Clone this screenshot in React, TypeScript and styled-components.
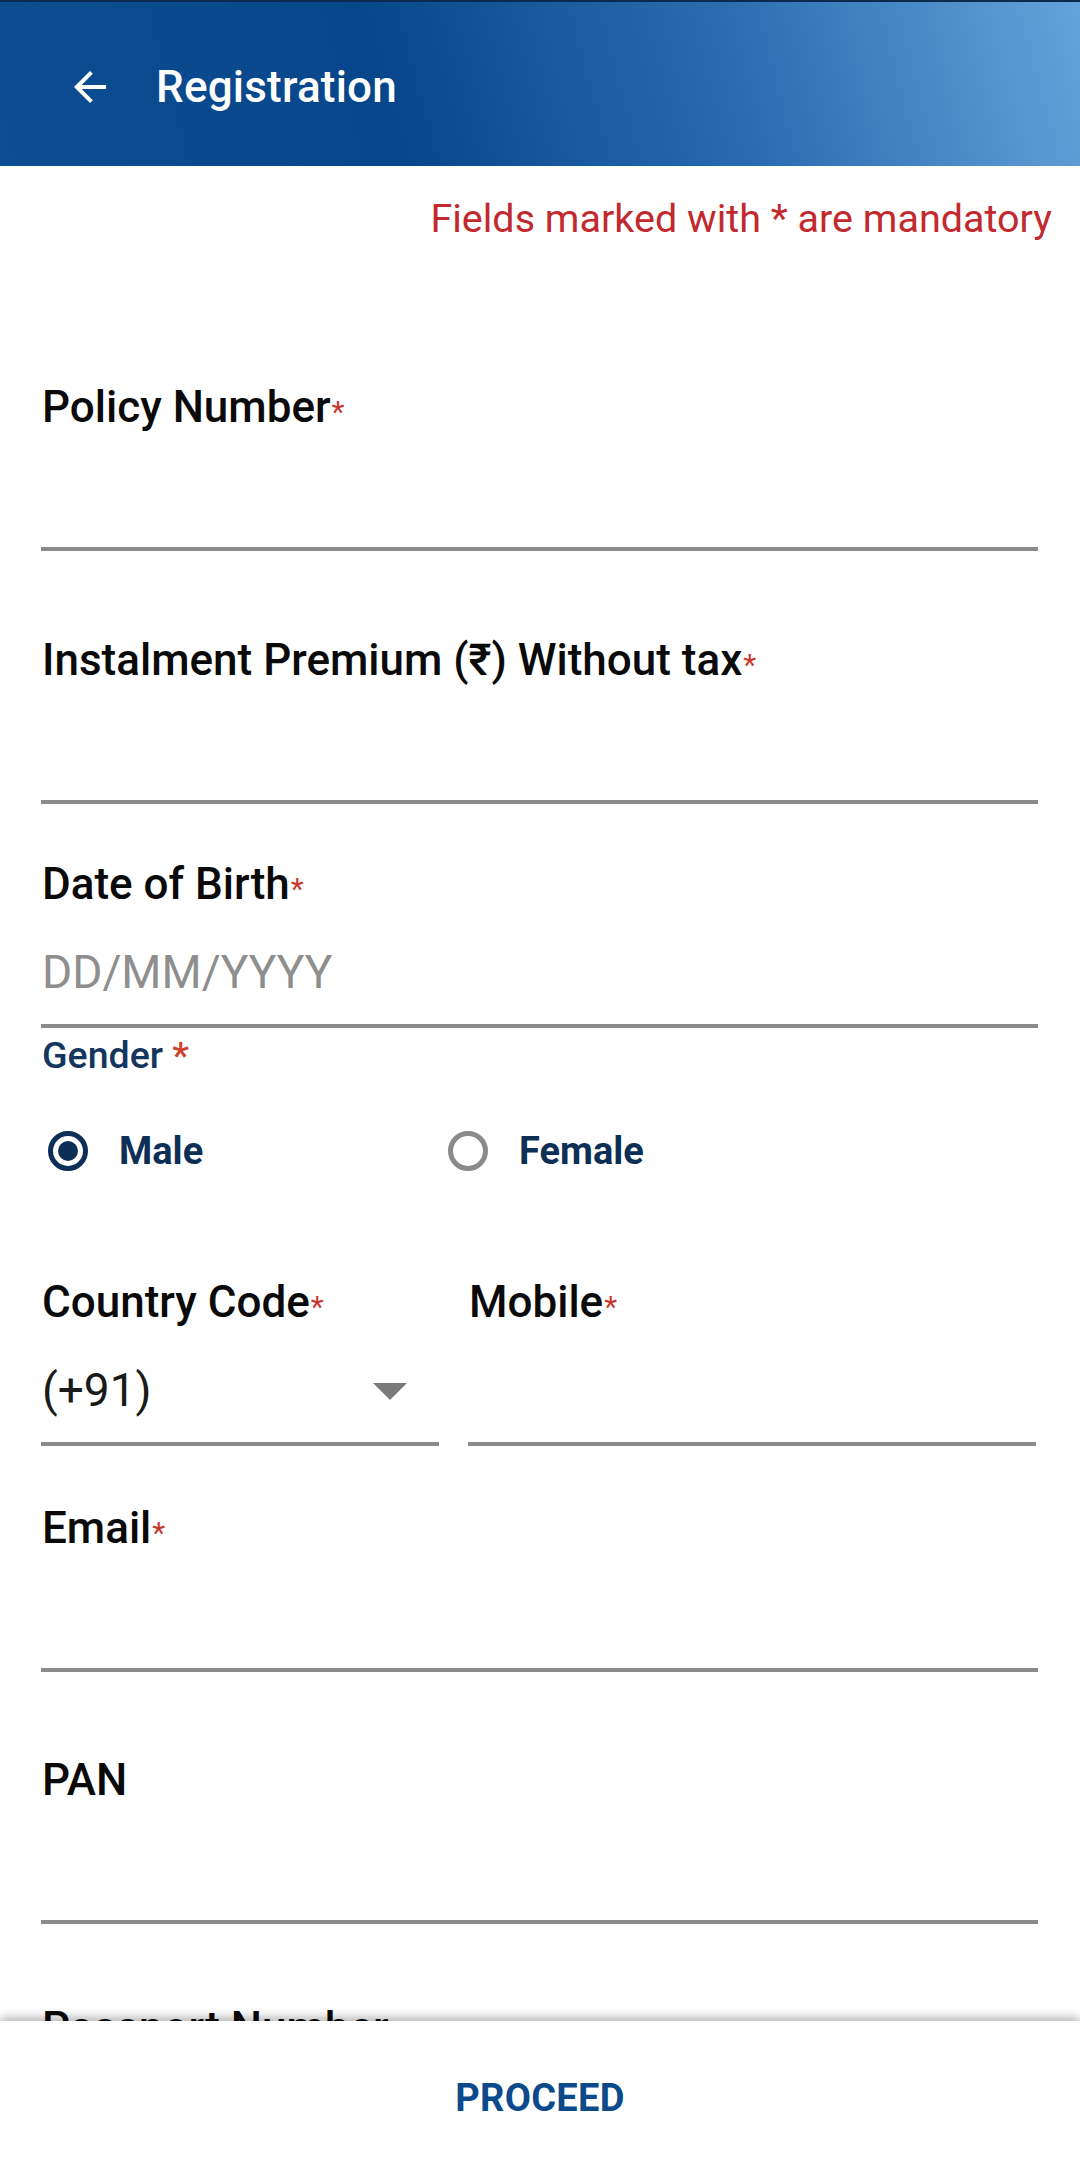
import React from "react";
import styled, { createGlobalStyle } from "styled-components";

const Global = createGlobalStyle`
  html, body { margin: 0; padding: 0; background: #ffffff; }
  body { font-family: Roboto, "Noto Sans", "Liberation Sans", sans-serif; }
  * { box-sizing: border-box; }
`;

const Screen = styled.div`
  width: 1080px;
  height: 2170px;
  display: flex;
  flex-direction: column;
  overflow: hidden;
  background: #ffffff;
`;

const AppBar = styled.header`
  flex: 0 0 166px;
  display: flex;
  align-items: center;
  gap: 42px;
  padding: 6px 0 0 66px;
  border-top: 2px solid #0b2a4d;
  background: linear-gradient(75deg, #0d4d92 0%, #07468b 36%, #2b6cb1 68%, #66a2db 100%);
`;

const BackButton = styled.button`
  width: 48px;
  height: 48px;
  padding: 0;
  border: none;
  background: transparent;
  color: #ffffff;
  display: flex;
  align-items: center;
  justify-content: center;
`;

const Title = styled.h1`
  margin: 0;
  color: #ffffff;
  font-size: 44px;
  font-weight: 500;
  letter-spacing: 0.2px;
`;

const Body = styled.main`
  flex: 1 1 auto;
  min-height: 0;
  overflow: hidden;
  display: flex;
  flex-direction: column;
`;

const Hint = styled.p`
  margin: 29px 28px 0 0;
  align-self: flex-end;
  font-size: 39.5px;
  line-height: 48px;
  color: #c2292e;
`;

const Form = styled.form`
  display: flex;
  flex-direction: column;
  padding: 0 42px 0 41px;
`;

const Field = styled.div<{ $mt: number }>`
  margin-top: ${(p) => p.$mt}px;
  display: flex;
  flex-direction: column;
`;

const Label = styled.label`
  height: 52px;
  padding-left: 1px;
  font-size: 44px;
  line-height: 52px;
  font-weight: 500;
  color: #0a0a0a;
  white-space: nowrap;
`;

const Req = styled.span`
  font-size: 30px;
  font-weight: 400;
  color: #c8372d;
  margin-left: 1px;
`;

const InputBox = styled.div<{ $placeholder?: boolean }>`
  height: 118px;
  display: flex;
  align-items: flex-end;
  justify-content: space-between;
  padding: 0 0 26px 1px;
  border-bottom: 4px solid #8b8b8b;
  font-size: 46px;
  line-height: 52px;
  color: ${(p) => (p.$placeholder ? "#8e8e8e" : "#1a1a1a")};
`;

const Caret = styled.span`
  width: 0;
  height: 0;
  margin: 0 32px 16px 0;
  border-left: 17px solid transparent;
  border-right: 17px solid transparent;
  border-top: 17px solid #7a7a7a;
`;

const GenderLabel = styled.div`
  margin-top: 5px;
  padding-left: 1px;
  font-size: 37.5px;
  line-height: 44px;
  font-weight: 500;
  color: #14365e;
`;

const GenderStar = styled.span`
  color: #d0412c;
`;

const RadioRow = styled.div`
  margin-top: 44px;
  height: 60px;
  display: grid;
  grid-template-columns: 400px 1fr;
  align-items: center;
`;

const RadioOption = styled.label`
  display: flex;
  align-items: center;
  gap: 31px;
  padding-left: 7px;
  font-size: 38px;
  font-weight: 700;
  color: #0e2f55;
`;

const RadioCircle = styled.span<{ $checked?: boolean }>`
  width: 40px;
  height: 40px;
  border-radius: 50%;
  border: 5px solid ${(p) => (p.$checked ? "#0e2f55" : "#8a8a8a")};
  display: flex;
  align-items: center;
  justify-content: center;
  &::after {
    content: "";
    width: 20px;
    height: 20px;
    border-radius: 50%;
    background: ${(p) => (p.$checked ? "#0e2f55" : "transparent")};
  }
`;

const SplitRow = styled.div`
  margin-top: 95px;
  margin-right: 2px;
  display: grid;
  grid-template-columns: 398px 1fr;
  column-gap: 29px;
`;

const Footer = styled.footer`
  flex: 0 0 149px;
  position: relative;
  z-index: 1;
  background: #ffffff;
  box-shadow: 0 -3px 10px rgba(0, 0, 0, 0.32);
  display: flex;
  align-items: center;
  justify-content: center;
`;

const Proceed = styled.button`
  border: none;
  background: transparent;
  font-family: inherit;
  font-size: 38px;
  font-weight: 700;
  color: #0c4a8c;
  letter-spacing: 0.3px;
  padding: 4px 0 0;
`;

const BackArrow = () => (
  <svg width="48" height="48" viewBox="0 0 24 24" fill="currentColor">
    <path d="M20 11H7.83l5.59-5.59L12 4l-8 8 8 8 1.41-1.41L7.83 13H20v-2z" />
  </svg>
);

type FieldProps = { label: string; required?: boolean; mt: number; placeholder?: string };

const TextField = ({ label, required, mt, placeholder }: FieldProps) => (
  <Field $mt={mt}>
    <Label>
      {label}
      {required && <Req>*</Req>}
    </Label>
    <InputBox $placeholder={!!placeholder}>{placeholder}</InputBox>
  </Field>
);

export default function App() {
  return (
    <>
      <Global />
      <Screen>
        <AppBar>
          <BackButton aria-label="Back">
            <BackArrow />
          </BackButton>
          <Title>Registration</Title>
        </AppBar>
        <Body>
          <Hint>Fields marked with * are mandatory</Hint>
          <Form>
            <TextField label="Policy Number" required mt={138} />
            <TextField label="Instalment Premium (₹) Without tax" required mt={83} />
            <TextField label="Date of Birth" required mt={54} placeholder="DD/MM/YYYY" />
            <GenderLabel>
              Gender <GenderStar>*</GenderStar>
            </GenderLabel>
            <RadioRow>
              <RadioOption>
                <RadioCircle $checked />
                Male
              </RadioOption>
              <RadioOption>
                <RadioCircle />
                Female
              </RadioOption>
            </RadioRow>
            <SplitRow>
              <Field $mt={0}>
                <Label>
                  Country Code<Req>*</Req>
                </Label>
                <InputBox>
                  <span>(+91)</span>
                  <Caret />
                </InputBox>
              </Field>
              <Field $mt={0}>
                <Label>
                  Mobile<Req>*</Req>
                </Label>
                <InputBox />
              </Field>
            </SplitRow>
            <TextField label="Email" required mt={56} />
            <TextField label="PAN" mt={82} />
            <TextField label="Passport Number" mt={78} />
          </Form>
        </Body>
        <Footer>
          <Proceed type="button">PROCEED</Proceed>
        </Footer>
      </Screen>
    </>
  );
}
